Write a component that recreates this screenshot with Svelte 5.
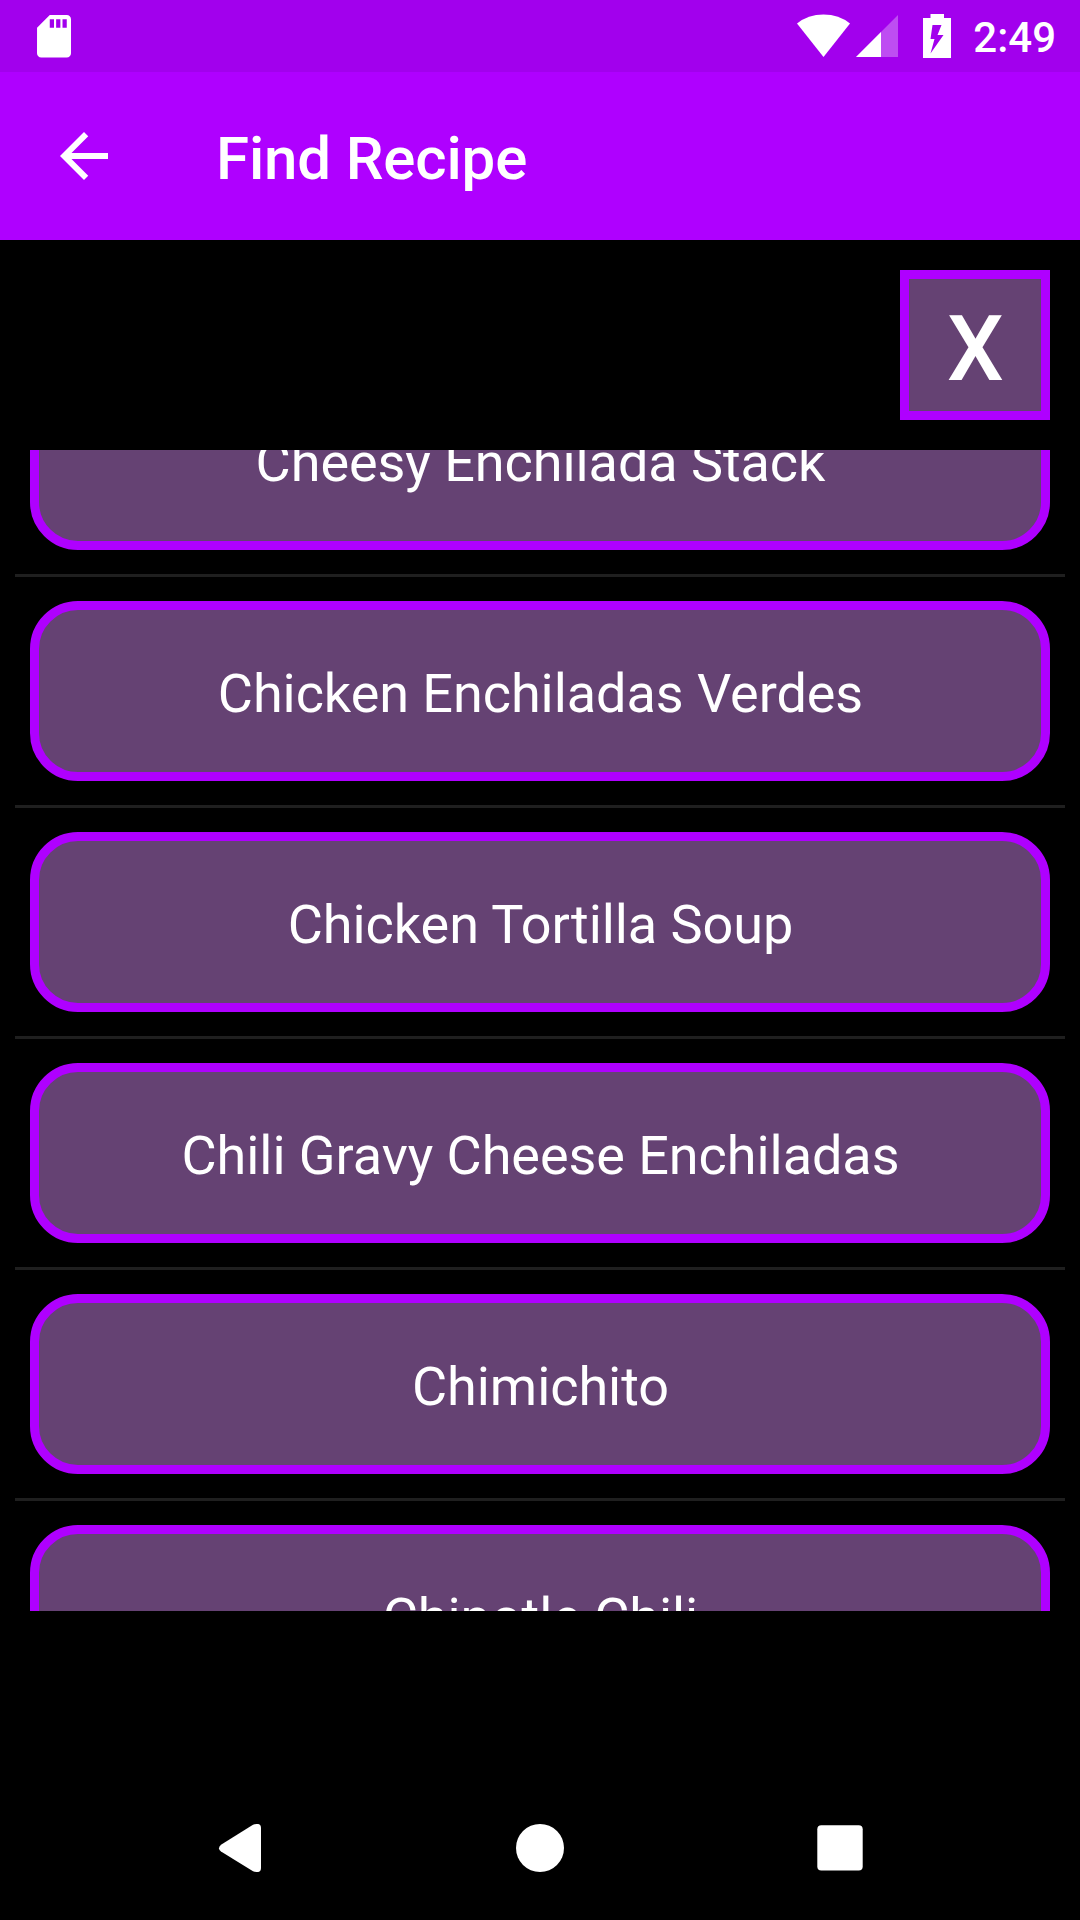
<script lang="ts">
  // Recipe search screen: clear button on top of a scrolled list of recipes.
  const title = 'Find Recipe';
  const time = '2:49';

  const recipes = [
    'Cheesy Enchilada Stack',
    'Chicken Enchiladas Verdes',
    'Chicken Tortilla Soup',
    'Chili Gravy Cheese Enchiladas',
    'Chimichito',
    'Chipotle Chili',
  ];
</script>

<div class="screen">
  <header class="status-bar">
    <svg class="sd" viewBox="-0.24 0.1 24 24" width="51" height="51">
      <path
        fill="#fff"
        d="M18 2h-8L4.02 8 4 20c0 1.1.9 2 2 2h12c1.1 0 2-.9 2-2V4c0-1.1-.9-2-2-2zm-6 6h-2V4h2v4zm3 0h-2V4h2v4zm3 0h-2V4h2v4z"
      />
    </svg>
    <div class="status-right">
      <!-- wifi, half signal, charging battery -->
      <svg viewBox="0 0 156 44" width="156" height="44">
        <path fill="#fff" d="M0 9.500Q11 .5 26.500 .5T53 9.500L26.500 43Z" />
        <path fill="#fff" fill-opacity=".3" d="M101 1V43H59Z" />
        <path fill="#fff" d="M84 18V43H59Z" />
        <path
          fill="#fff"
          fill-rule="evenodd"
          d="M133.500 0h13.500v4h7v40h-28V4h7.500zM135.500 11l-2 14h4l-4 14.500L146.500 21h-6l4-10z"
        />
      </svg>
      <span class="time">{time}</span>
    </div>
  </header>

  <div class="app-bar">
    <button class="back" type="button" aria-label="Back">
      <svg viewBox="0 0 24 24" width="72" height="72">
        <path fill="#fff" d="M20 11H7.830l5.590-5.590L12 4l-8 8 8 8 1.410-1.410L7.830 13H20v-2z" />
      </svg>
    </button>
    <h1>{title}</h1>
  </div>

  <div class="search-row">
    <button class="clear" type="button">X</button>
  </div>

  <ul class="list">
    {#each recipes as recipe}
      <li>
        <button class="recipe" type="button">{recipe}</button>
      </li>
    {/each}
  </ul>

  <nav class="nav-bar">
    <svg viewBox="0 0 48 48" width="48" height="48">
      <path fill="#fff" d="M5 20.800 37 .8Q45 -2 45 4V44Q45 50 37 47.200L5 27.600Q1 24.200 5 20.800Z" />
    </svg>
    <svg viewBox="0 0 48 48" width="48" height="48">
      <circle cx="24" cy="24" r="24" fill="#fff" />
    </svg>
    <svg viewBox="0 0 48 48" width="48" height="48">
      <rect x="1.300" y="1.200" width="45.400" height="45.400" rx="4" fill="#fff" />
    </svg>
  </nav>
</div>

<style>
  :global(body) { margin: 0; background: #000; }
  .screen {
    width: 1080px;
    height: 1920px;
    display: flex;
    flex-direction: column;
    overflow: hidden;
    background: #000;
    color: #fff;
    font-family: Roboto, sans-serif;
  }
  svg { display: block; flex: none; }
  button {
    box-sizing: border-box;
    margin: 0;
    padding: 0;
    border: 0;
    background: none;
    color: inherit;
    font-family: inherit;
  }
  .status-bar {
    box-sizing: border-box;
    height: 72px;
    padding: 0 24px 0 28px;
    display: flex;
    flex: none;
    justify-content: space-between;
    align-items: center;
    background: #a200ed;
  }
  .status-right { display: flex; align-items: center; gap: 20px; }
  .time { font-size: 42px; line-height: 48px; font-weight: 500; padding-top: 4px; }
  .app-bar {
    box-sizing: border-box;
    height: 168px;
    padding: 0 48px;
    display: flex;
    flex: none;
    align-items: center;
    gap: 96px;
    background: #af00ff;
  }
  h1 { margin: 0; padding-top: 5px; font-size: 60px; line-height: 70px; font-weight: 500; letter-spacing: -0.15px; }
  .search-row {
    box-sizing: border-box;
    height: 210px;
    padding: 30px;
    display: flex;
    flex: none;
    justify-content: flex-end;
  }
  .clear {
    width: 150px;
    height: 150px;
    padding: 9px 0 0 1px;
    border: 9px solid #af00ff;
    background: #654273;
    font-size: 90px;
    line-height: 105px;
    font-weight: 500;
  }
  .list {
    box-sizing: border-box;
    height: 1161px;
    margin: 0;
    padding: 0 15px;
    display: flex;
    flex: none;
    flex-direction: column;
    justify-content: flex-start;
    list-style: none;
    overflow: hidden;
  }
  li { flex: none; padding: 24px 15px; border-bottom: 3px solid #1f1f1f; }
  /* scrolled partway through the first row */
  li:first-child { margin-top: -104px; }
  .recipe {
    display: block;
    width: 100%;
    height: 180px;
    padding: 6px 0 0 1px;
    border: 9px solid #af00ff;
    border-radius: 48px;
    background: #654273;
    font-size: 54px;
    line-height: 64px;
    font-weight: 400;
    letter-spacing: -0.06px;
  }
  .nav-bar {
    height: 144px;
    margin-top: auto;
    padding: 0 216px;
    display: flex;
    justify-content: space-between;
    align-items: center;
  }
</style>
